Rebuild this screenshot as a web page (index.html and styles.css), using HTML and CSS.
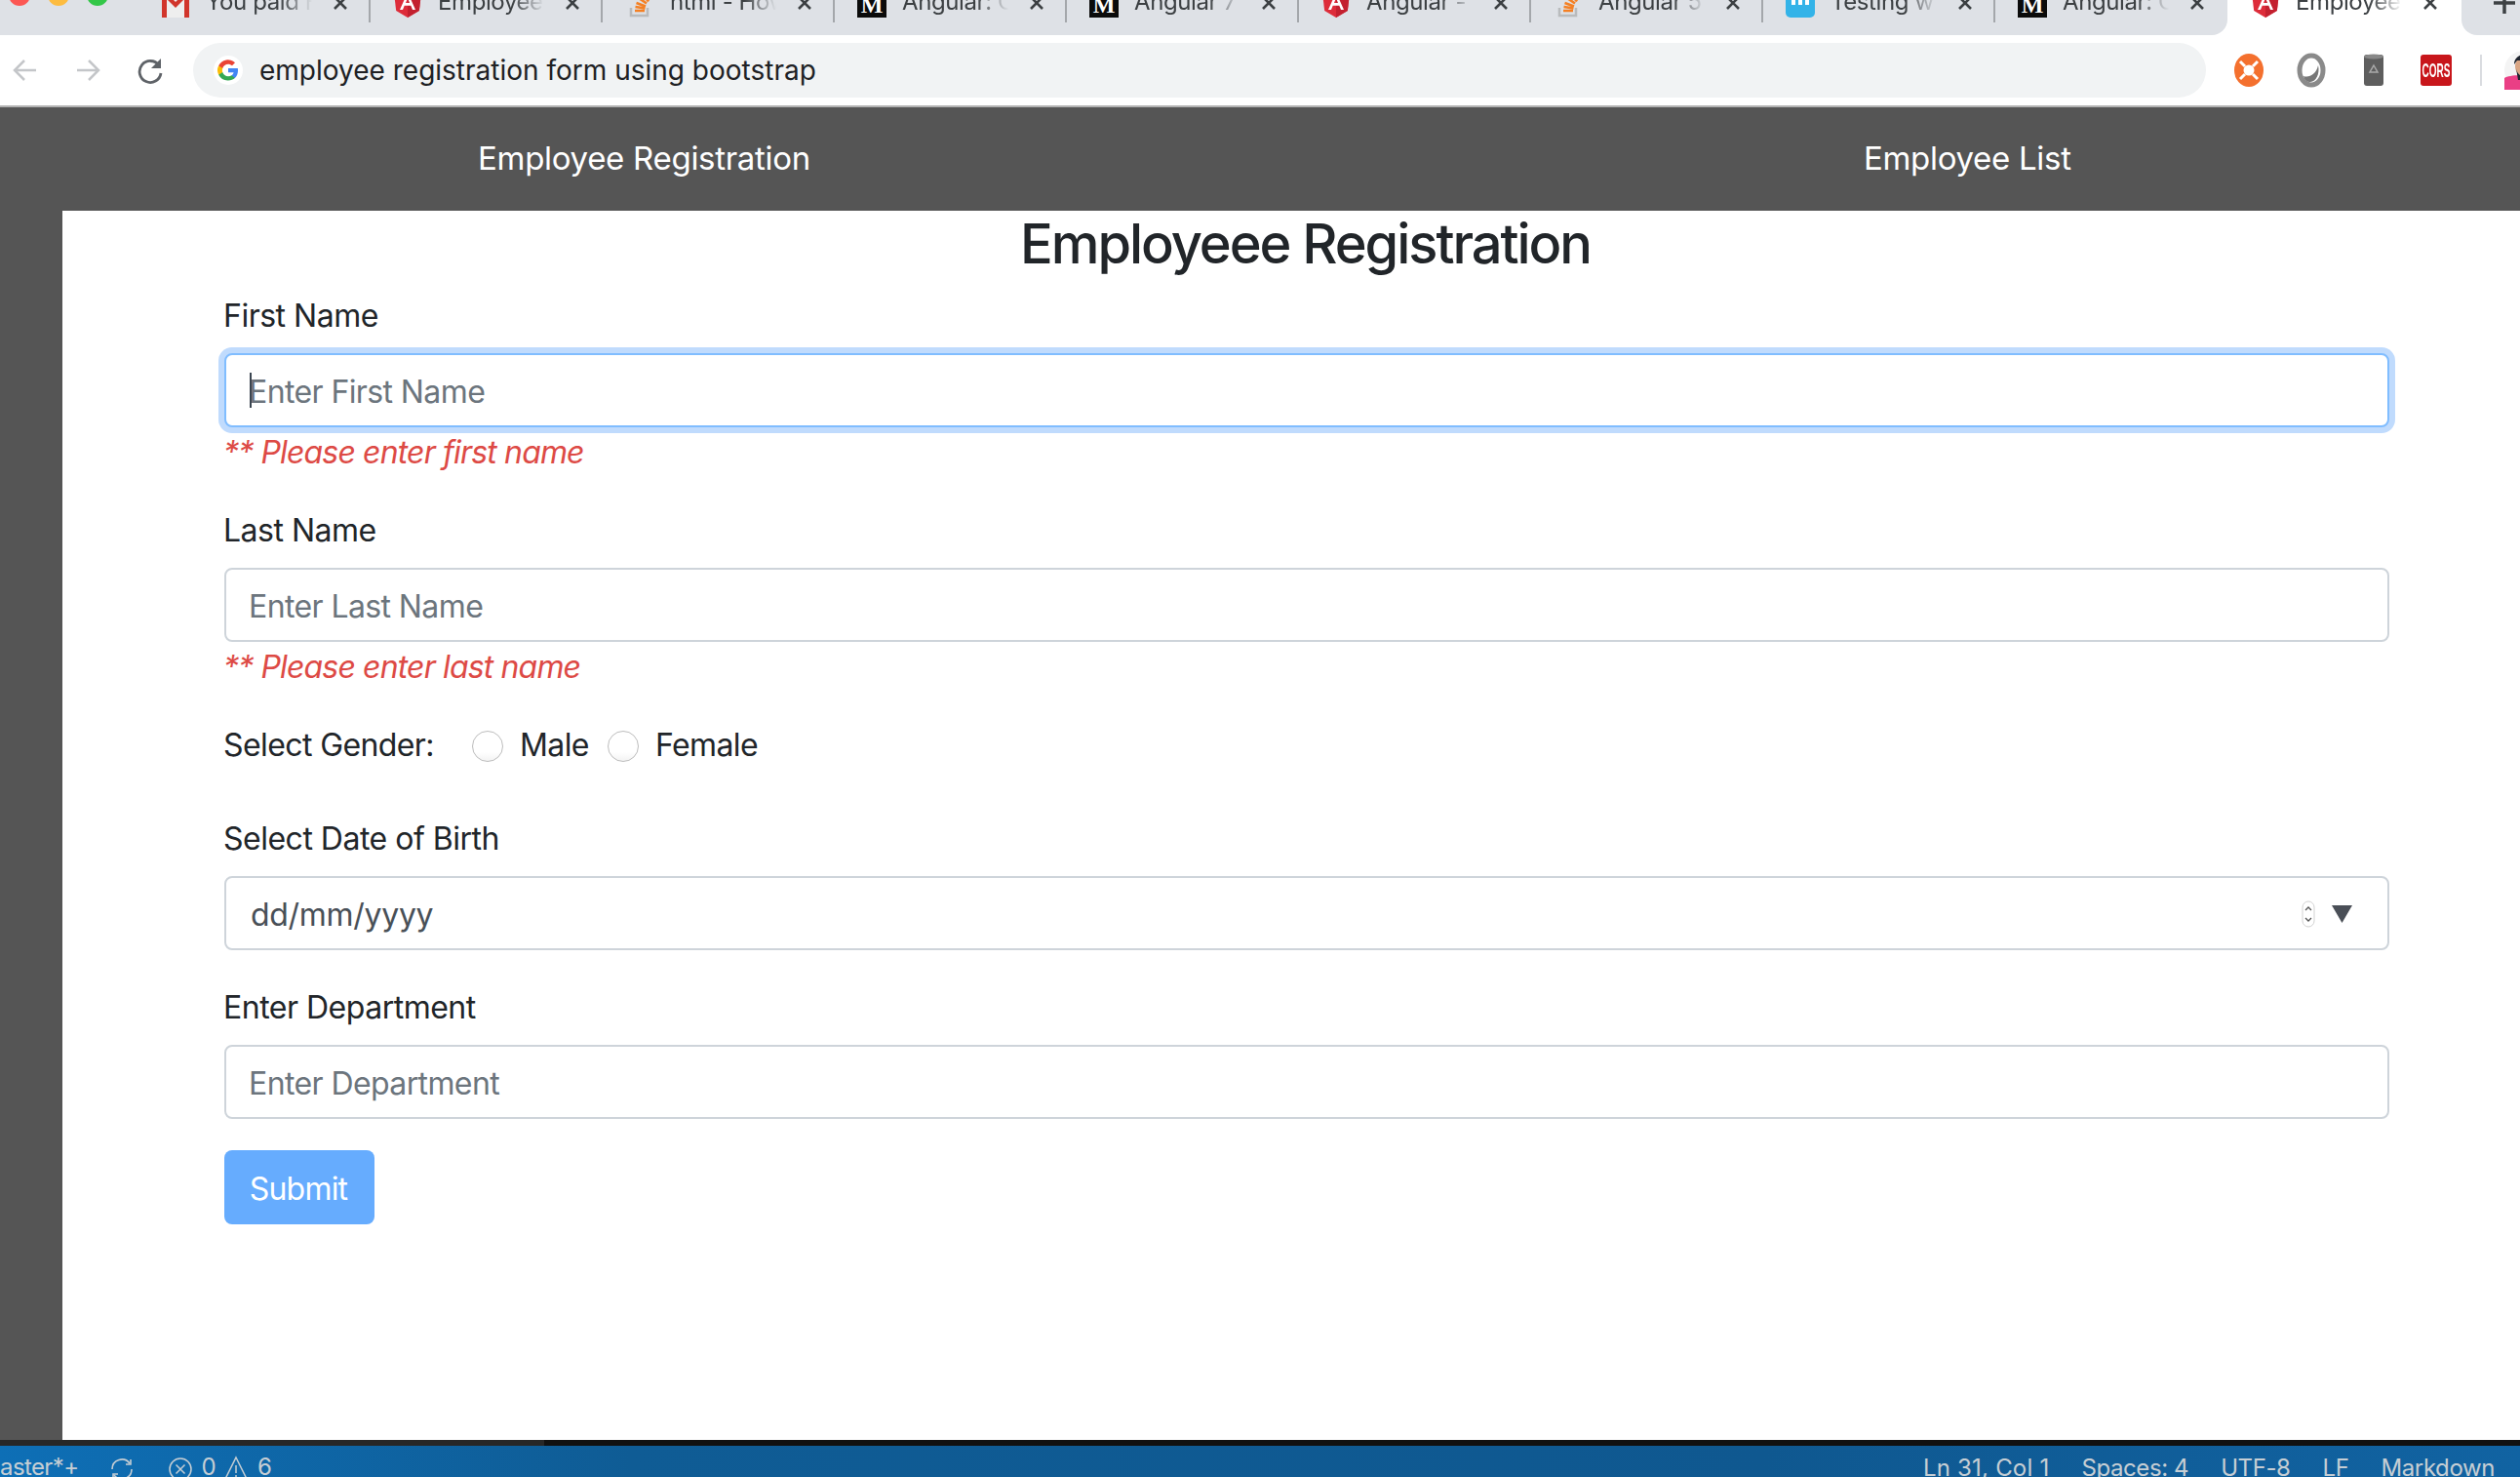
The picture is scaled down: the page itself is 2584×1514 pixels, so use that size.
FILE: index.html
```html
<!DOCTYPE html>
<html lang="en">
<head>
<meta charset="utf-8">
<title>Employee Registration</title>
<link rel="stylesheet" href="styles.css">
</head>
<body>
<svg class="defs" width="0" height="0" aria-hidden="true">
  <symbol id="i-x" viewBox="0 0 16 16"><path d="M2 2l12 12M14 2L2 14" fill="none" stroke="#3c4043" stroke-width="2.6"/></symbol>
  <symbol id="i-ng" viewBox="0 0 30 30"><path d="M15 0l14 5-2.2 18L15 30 3.2 23 1 5z" fill="#dd2c3a"/><path d="M15 0l14 5-2.2 18L15 30z" fill="#c3202f"/><path d="M15 4L7 22h3l1.7-4.2h6.6L20 22h3zM13 15l2-5 2 5z" fill="#fff"/></symbol>
  <symbol id="i-so" viewBox="0 0 30 30"><path d="M6 20v8h17v-8" fill="none" stroke="#b9bbbd" stroke-width="2.5"/><path d="M10 23h10M10.500 19l10 1.500M11.500 15l9.500 3.500M14 10l8 5.500M18 6l6 7.500" fill="none" stroke="#f48024" stroke-width="2.6"/></symbol>
</svg>
<div class="tabstrip">
  <div class="lights"><i class="light red"></i><i class="light amber"></i><i class="light green"></i></div>
  <div class="tabgroup">
    <div class="tab"><svg class="fav" viewBox="0 0 30 30"><rect x="1" y="0" width="28" height="30" fill="#eee"/><path d="M1 0h5v30H1zM24 0h5v30h-5zM1 0l14 14L29 0v6L15 20 1 6z" fill="#d1352b"/></svg><span class="title">You paid F</span><svg class="close"><use href="#i-x"/></svg></div>
    <div class="tab"><svg class="fav"><use href="#i-ng"/></svg><span class="title">Employee</span><svg class="close"><use href="#i-x"/></svg></div>
    <div class="tab"><svg class="fav"><use href="#i-so"/></svg><span class="title">html - How</span><svg class="close"><use href="#i-x"/></svg></div>
    <div class="tab"><span class="fav medium">M</span><span class="title">Angular: C</span><svg class="close"><use href="#i-x"/></svg></div>
    <div class="tab"><span class="fav medium">M</span><span class="title">Angular 7</span><svg class="close"><use href="#i-x"/></svg></div>
    <div class="tab"><svg class="fav"><use href="#i-ng"/></svg><span class="title">Angular -</span><svg class="close"><use href="#i-x"/></svg></div>
    <div class="tab"><svg class="fav"><use href="#i-so"/></svg><span class="title">Angular 5</span><svg class="close"><use href="#i-x"/></svg></div>
    <div class="tab"><svg class="fav" viewBox="0 0 30 30"><path d="M0 0h30v25a5 5 0 0 1-5 5H5a5 5 0 0 1-5-5z" fill="#33b3e8"/><path d="M6 12h4v5H6zM13 12h4v5h-4zM20 12h4v5h-4z" fill="#fff"/></svg><span class="title">Testing w</span><svg class="close"><use href="#i-x"/></svg></div>
    <div class="tab"><span class="fav medium">M</span><span class="title">Angular: C</span><svg class="close"><use href="#i-x"/></svg></div>
  </div>
  <div class="tab active"><svg class="fav"><use href="#i-ng"/></svg><span class="title">Employee</span><svg class="close"><use href="#i-x"/></svg></div>
  <div class="newtab"><svg class="plus" viewBox="0 0 22 22"><path d="M11 0v22M0 11h22" stroke="#3c4043" stroke-width="3.500"/></svg></div>
</div>

<div class="toolbar">
  <svg class="navicon" viewBox="0 0 28 28"><path d="M25 14H4M13 4L3 14l10 10" fill="none" stroke="#c4c6c9" stroke-width="2.500"/></svg>
  <svg class="navicon" viewBox="0 0 28 28"><path d="M3 14h21M15 4l10 10-10 10" fill="none" stroke="#c4c6c9" stroke-width="2.500"/></svg>
  <svg class="navicon" viewBox="0 0 28 28"><path d="M23 9a11 11 0 1 0 2 8" fill="none" stroke="#5f6368" stroke-width="2.800"/><path d="M25 2v10H15z" fill="#5f6368"/></svg>
  <div class="omnibox">
    <svg class="google" viewBox="0 0 30 30"><circle cx="15" cy="15" r="15" fill="#fff"/><path d="M25 15.300c0-.8-.1-1.500-.2-2.200H15v4.100h5.600a4.800 4.800 0 0 1-2.100 3.100v2.700h3.400c2-1.800 3.100-4.500 3.100-7.700z" fill="#4285f4"/><path d="M15 25.500c2.800 0 5.200-.9 6.900-2.500l-3.400-2.700c-.9.600-2.100 1-3.500 1-2.700 0-5-1.800-5.800-4.300H5.200v2.800A10.500 10.500 0 0 0 15 25.500z" fill="#34a853"/><path d="M9.200 17c-.2-.6-.3-1.300-.3-2s.1-1.400.3-2v-2.800H5.200a10.500 10.500 0 0 0 0 9.600z" fill="#fbbc05"/><path d="M15 8.700c1.500 0 2.900.5 4 1.600l3-3A10.500 10.500 0 0 0 5.200 10.200l4 2.800c.8-2.500 3.100-4.300 5.800-4.300z" fill="#ea4335"/></svg>
    <span class="url">employee registration form using bootstrap</span>
  </div>
  <div class="extensions">
    <svg class="ext" viewBox="0 0 32 36"><ellipse cx="16" cy="18" rx="15" ry="17" fill="#f4702e"/><circle cx="16" cy="18" r="5.500" fill="#fff"/><path d="M7 9l5 5M25 9l-5 5M7 27l5-5M25 27l-5-5" stroke="#fff" stroke-width="3"/></svg>
    <svg class="ext" viewBox="0 0 32 36"><ellipse cx="16" cy="18" rx="12" ry="15" fill="#fff" stroke="#8a8a8a" stroke-width="5"/><path d="M8 24c6 2 13-2 15-11 2 8-2 17-8 17-3 0-6-2-7-6z" fill="#777"/></svg>
    <svg class="ext" viewBox="0 0 32 36"><rect x="6" y="2" width="20" height="32" rx="3" fill="#5e5e5e"/><ellipse cx="16" cy="4" rx="10" ry="2.500" fill="#888"/><path d="M16 13l4 7h-8z" fill="none" stroke="#aaa" stroke-width="1.500"/></svg>
    <div class="cors"><span class="cors-text">CORS</span></div>
    <i class="extsep"></i>
    <svg class="avatar" viewBox="0 0 40 40"><circle cx="20" cy="20" r="20" fill="#f4f4f4"/><path d="M0 28c6-4 34-4 40 0v12H0z" fill="#ea3f85"/><circle cx="22" cy="16" r="11" fill="#d9a583"/><path d="M10 14c0-14 24-14 24 0l-3-4H13zM12 18c2 12 18 12 20 0l-2 12H14z" fill="#1f2530"/></svg>
  </div>
</div>

<nav class="appnav">
  <a class="navlink">Employee Registration</a>
  <a class="navlink">Employee List</a>
</nav>

<div class="workspace">
  <div class="sidebar"></div>
  <main class="content">
    <h1 class="heading">Employeee Registration</h1>
    <form class="form">
      <div class="group">
        <label class="label">First Name</label>
        <div class="focus-wrap"><input class="control focused" placeholder="Enter First Name"><i class="caret"></i></div>
        <div class="error">** Please enter first name</div>
      </div>
      <div class="group">
        <label class="label">Last Name</label>
        <input class="control" placeholder="Enter Last Name">
        <div class="error">** Please enter last name</div>
      </div>
      <div class="gender">
        <span class="gender-label">Select Gender:</span>
        <i class="radio"></i><span class="opt">Male</span>
        <i class="radio second"></i><span class="opt">Female</span>
      </div>
      <div class="group date-group">
        <label class="label">Select Date of Birth</label>
        <div class="control date">
          <span>dd/mm/yyyy</span>
          <svg class="spin" viewBox="0 0 14 28"><rect x="1" y="1" width="12" height="26" rx="6" fill="#fff" stroke="#d2d2d2"/><path d="M4 10l3-3 3 3M4 18l3 3 3-3" fill="none" stroke="#555" stroke-width="1.300"/></svg>
          <svg class="drop" viewBox="0 0 21 18"><path d="M0 0h21L10.500 18z" fill="#4a4f57"/></svg>
        </div>
      </div>
      <div class="group dept-group">
        <label class="label">Enter Department</label>
        <input class="control" placeholder="Enter Department">
      </div>
      <button class="submit" type="button">Submit</button>
    </form>
  </main>
</div>

<div class="scrollline"><i class="scrollthumb"></i></div>
<footer class="status">
  <div class="status-left">
    <span>aster*+</span>
    <svg class="sicon sync" viewBox="0 0 26 26"><path d="M3 13a10 10 0 0 1 18-6M23 13a10 10 0 0 1-18 6" fill="none" stroke="#c6ced4" stroke-width="1.600"/><path d="M22 3v5h-5M4 23v-5h5" fill="none" stroke="#c6ced4" stroke-width="1.600"/></svg>
    <svg class="sicon err" viewBox="0 0 26 26"><circle cx="13" cy="13" r="11" fill="none" stroke="#c6ced4" stroke-width="1.500"/><path d="M8.500 8.500l9 9M17.500 8.500l-9 9" stroke="#c6ced4" stroke-width="1.500"/></svg>
    <span>0</span>
    <svg class="sicon warn" viewBox="0 0 26 26"><path d="M13 2l11 22H2z" fill="none" stroke="#c6ced4" stroke-width="1.500"/><path d="M13 10v8M13 20v2" stroke="#c6ced4" stroke-width="1.500"/></svg>
    <span>6</span>
  </div>
  <div class="status-right">
    <span class="pos">Ln 31, Col 1</span><span>Spaces: 4</span><span>UTF-8</span><span>LF</span><span>Markdown</span>
  </div>
</footer>
</body>
</html>
```
FILE: styles.css
```css
* { box-sizing: border-box; }
html, body { margin: 0; height: 1514px; overflow: hidden; }
body { width: 2584px; display: flex; flex-direction: column; background: #fff; font-family: Inter, "Liberation Sans", sans-serif; color: #212529; }
.defs { position: absolute; }

/* browser tab strip */
.tabstrip { position: relative; display: flex; height: 36px; flex: none; overflow: hidden; background: #fff; }
.lights { position: absolute; left: 9px; top: -16px; display: flex; gap: 18px; }
.light { width: 22px; height: 22px; border-radius: 50%; }
.red { background: #fc5753; }
.amber { background: #fdbc40; }
.green { background: #33c748; }
.tabgroup { display: flex; width: 2284px; padding-left: 141px; background: #dee1e6; border-bottom-right-radius: 16px; }
.tab { position: relative; flex: none; display: flex; align-items: flex-start; width: 238px; height: 36px; padding-left: 24px; }
.tab + .tab::before { content: ""; position: absolute; left: -1px; top: 0; width: 2px; height: 23px; background: #a4a7ab; }
.active { width: 240px; }
.fav { flex: none; width: 30px; height: 30px; margin-top: -12px; }
.medium { display: block; background: #0b0b0b; color: #fff; font: bold 24px/34px "Liberation Serif", serif; text-align: center; }
.title { flex: none; width: 109px; margin-left: 16px; margin-top: -14px; font-size: 24px; letter-spacing: -0.4px; line-height: 32px; white-space: nowrap; overflow: hidden; color: #3c4043; -webkit-mask-image: linear-gradient(to right, #000 70%, transparent 100%); mask-image: linear-gradient(to right, #000 70%, transparent 100%); }
.close { flex: none; width: 16px; height: 16px; margin-left: 21px; margin-top: -5px; }
.newtab { flex: 1; background: #dee1e6; border-bottom-left-radius: 16px; padding-left: 33px; }
.plus { display: block; width: 22px; height: 22px; margin-top: -8px; }

/* toolbar */
.toolbar { display: flex; align-items: center; flex: none; height: 74px; padding: 0 0 1px 12px; border-bottom: 2px solid #b3b3b3; background: #fff; }
.navicon { flex: none; width: 28px; height: 28px; margin-right: 36px; }
.omnibox { flex: none; display: flex; align-items: center; width: 2064px; height: 56px; margin-left: -6px; padding-left: 21px; border-radius: 28px; background: #f1f3f4; }
.google { flex: none; width: 30px; height: 30px; }
.url { margin-left: 17px; font-size: 28px; color: #202124; white-space: nowrap; }
.extensions { display: flex; align-items: center; margin-left: 28px; overflow: hidden; }
.ext { flex: none; width: 32px; height: 36px; margin-right: 32px; }
.cors { flex: none; display: flex; justify-content: center; width: 32px; height: 32px; overflow: hidden; border-radius: 3px; background: #c8161b; color: #fff; font: bold 20px/32px "Liberation Sans", sans-serif; }
.cors-text { display: inline-block; transform: scaleX(0.5); }
.extsep { flex: none; width: 2px; height: 32px; margin-left: 29px; background: #dadce0; }
.avatar { flex: none; width: 40px; height: 40px; margin-left: 23px; }

/* app nav */
.appnav { display: flex; align-items: center; gap: 1080px; flex: none; height: 106px; padding: 0 0 2px 490px; background: #555; }
.navlink { color: #fff; font-size: 33px; letter-spacing: -0.3px; white-space: nowrap; }

/* page */
.workspace { display: flex; flex: 1; min-height: 0; }
.sidebar { flex: none; width: 64px; background: #555; }
.content { flex: 1; padding: 0 134px 0 166px; letter-spacing: -0.6px; }
.heading { margin: 0 0 16px; padding: 2px 3px 0 0; font-size: 56px; font-weight: 500; line-height: 65px; letter-spacing: -2.05px; text-align: center; color: #212529; }
.group { margin-bottom: 32px; }
.date-group { margin-bottom: 34px; }
.dept-group { margin-bottom: 32px; }
.label { display: block; margin: 0 0 14px -1px; padding-top: 1px; font-size: 32px; line-height: 48px; letter-spacing: -0.5px; }
.control { display: block; width: 100%; height: 76px; padding: 2px 23px 0; border: 2px solid #ced4da; border-radius: 8px; background: #fff; font: 32px Inter, "Liberation Sans", sans-serif; letter-spacing: -0.6px; color: #495057; outline: none; }
.control::placeholder { color: #6c757d; opacity: 1; }
.focus-wrap { position: relative; }
.focused { border-color: #80bdff; box-shadow: 0 0 0 6px #c0dbfd; }
.caret { position: absolute; left: 26px; top: 20px; width: 2px; height: 36px; background: #3a4550; }
.error { margin-left: -1px; padding-top: 2px; font-size: 32px; line-height: 47px; letter-spacing: -0.85px; font-style: italic; color: #dd4a45; }
.gender { display: flex; align-items: center; height: 48px; margin: 0 0 48px -1px; font-size: 32px; }
.gender-label { width: 255px; padding-top: 1px; }
.radio { flex: none; width: 32px; height: 32px; margin-top: 3px; border: 1.500px solid #bdbdbd; border-radius: 50%; background: linear-gradient(#fff, #fff 70%, #f3f3f3); }
.second { margin-left: 19px; }
.opt { margin-left: 17px; padding-top: 1px; }
.date { display: flex; align-items: center; padding-left: 25px; letter-spacing: -0.3px; }
.date span { flex: 1; }
.spin { flex: none; width: 14px; height: 28px; }
.drop { flex: none; width: 21px; height: 18px; margin: 0 13px 0 17px; }
.submit { display: block; width: 154px; height: 76px; padding: 2px 2px 0 0; border: 0; border-radius: 8px; background: #66acfe; color: #fff; font: 32px Inter, "Liberation Sans", sans-serif; letter-spacing: -0.8px; }

/* editor status */
.scrollline { flex: none; height: 6px; background: #111; }
.scrollthumb { display: block; width: 558px; height: 6px; background: #272727; }
.status { display: flex; justify-content: space-between; flex: none; height: 32px; overflow: hidden; background: linear-gradient(to right, #0e6fb6, #0f5c95 25%, #0f5890 70%, #1163a2); color: #c6ced4; font-size: 24px; letter-spacing: -0.6px; line-height: 32px; }
.status-left { display: flex; align-items: flex-start; padding-top: 10px; }
.sicon { flex: none; width: 26px; height: 26px; }
.sync { margin-left: 31px; margin-top: 1px; }
.err { margin-left: 34px; margin-top: 1px; }
.warn { margin-left: 8px; }
.status-left span { line-height: 32px; margin-top: -4px; }
.err + span { margin-left: 9px; }
.warn + span { margin-left: 9px; }
.status-right { display: flex; gap: 33px; padding: 7px 26px 0 0; white-space: nowrap; letter-spacing: -0.4px; }
.pos { letter-spacing: 0.2px; }
```
